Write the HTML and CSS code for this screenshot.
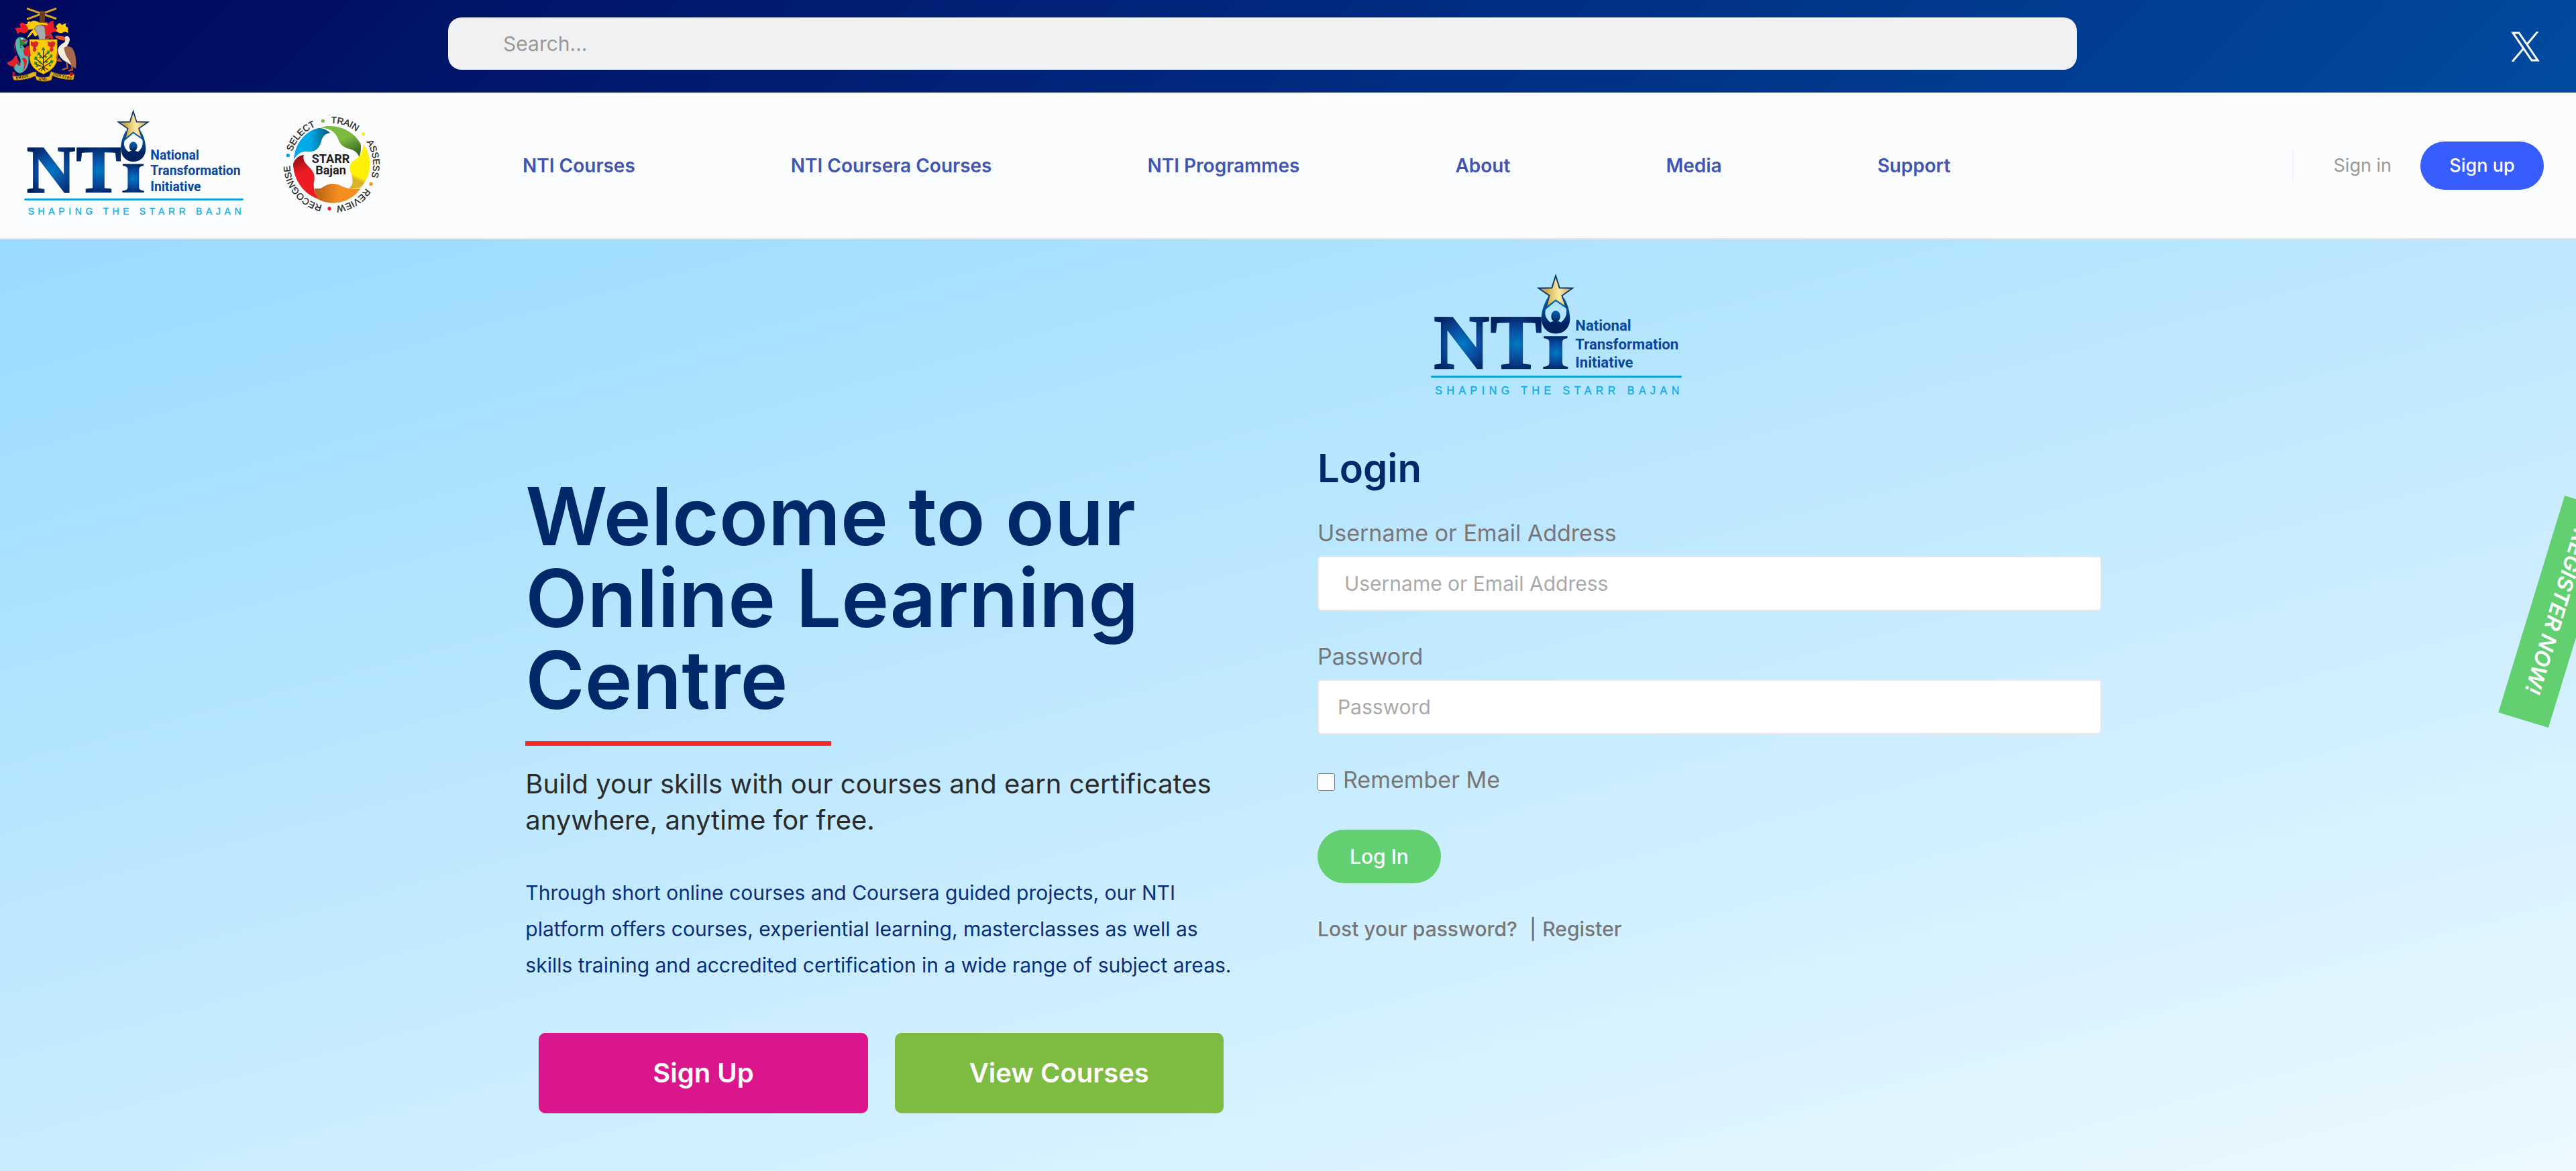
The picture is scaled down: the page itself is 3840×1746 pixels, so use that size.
FILE: index.html
```html
<!DOCTYPE html>
<html lang="en">
<head>
<meta charset="utf-8">
<meta name="viewport" content="width=device-width, initial-scale=1">
<title>National Transformation Initiative – Login</title>
<link rel="stylesheet" href="styles.css">
</head>
<body>

<svg class="defs" aria-hidden="true">
  <defs>
    <radialGradient id="blueN" gradientUnits="userSpaceOnUse" cx="172" cy="312" r="130"><stop offset="0" stop-color="#007ac4"/><stop offset=".5" stop-color="#0a4a9c"/><stop offset="1" stop-color="#00215f"/></radialGradient>
    <radialGradient id="blueT" gradientUnits="userSpaceOnUse" cx="385" cy="312" r="115"><stop offset="0" stop-color="#007ac4"/><stop offset=".5" stop-color="#0a4a9c"/><stop offset="1" stop-color="#00215f"/></radialGradient>
    <radialGradient id="blueI" gradientUnits="userSpaceOnUse" cx="537" cy="348" r="72"><stop offset="0" stop-color="#007ac4"/><stop offset=".5" stop-color="#0a4a9c"/><stop offset="1" stop-color="#00215f"/></radialGradient>
    <linearGradient id="cup" x1="0" y1="0" x2="0" y2="1"><stop offset="0" stop-color="#0a6fb8"/><stop offset=".75" stop-color="#00215f"/></linearGradient>
    <linearGradient id="head" x1="0" y1="0" x2="0" y2="1"><stop offset="0" stop-color="#0066b0"/><stop offset="1" stop-color="#00215f"/></linearGradient>
    <linearGradient id="gold"><stop offset="0" stop-color="#c59a2c"/><stop offset=".25" stop-color="#d3ae45"/><stop offset=".6" stop-color="#fbeaa5"/><stop offset="1" stop-color="#c9a038"/></linearGradient>
    <symbol id="nti" viewBox="49 38 981 478">
      <g font-family="'Liberation Serif', serif" font-weight="700" stroke-width="7">
        <text x="60" y="408" font-size="300" fill="url(#blueN)" stroke="url(#blueN)">N</text>
        <text x="282" y="408" font-size="300" fill="url(#blueT)" stroke="url(#blueT)">T</text>
      </g>
      <path fill="url(#blueI)" d="M490 283H583V291Q563 293 563 306V388Q563 401 585 403V411H488V403Q512 401 512 388V306Q512 293 490 291Z"/>
      <path fill="url(#cup)" d="M506 130C490 160 482 182 481 214C482 250 506 273 537 273C570 273 593 250 593 214C592 182 583 155 568 130L577 170C582 190 580 212 557 229C553 222 521 222 517 229C494 212 491 190 502 170Z"/>
      <ellipse cx="537" cy="205" rx="18" ry="22" fill="url(#head)"/>
      <path fill="url(#gold)" stroke="#0b3478" stroke-width="5" d="M537 46L552 94L603 95L562 124L578 170L537 142L499 172L512 124L470 95L522 94Z"/>
      <path fill="none" stroke="#0a6fb8" stroke-width="5" d="M500 174L537 143L576 170"/>
      <g font-family="Roboto, sans-serif" font-weight="700" font-size="58" fill="#0c479d">
        <text x="614" y="262">National</text>
        <text x="614" y="334">Transformation</text>
        <text x="614" y="406">Initiative</text>
      </g>
      <path fill="#00a2da" d="M49 438h981v8H49z"/>
      <text class="tagline" x="65" y="510" font-size="42" fill="#10ade4" stroke="#10ade4">SHAPING THE STARR BAJAN</text>
    </symbol>
  </defs>
</svg>

<div class="topbar">
  <a class="arms" href="#" aria-label="Government of Barbados">
    <svg viewBox="0 0 390 390" width="130" height="130" aria-hidden="true">
      <path d="M120 38L252 84M120 86L252 38" stroke="#d9a520" stroke-width="9"/>
      <path d="M176 102L178 58Q176 48 187 47Q202 48 202 60L200 102Z" fill="#6b3f1c"/>
      <path d="M182 104Q150 84 138 98Q122 92 122 108L104 110Q120 120 122 134L150 130Q128 150 120 172Q138 160 146 146Q150 158 158 164L186 140Z" fill="#ffca05"/>
      <path d="M122 118Q104 94 92 104Q84 112 94 122L66 126Q76 136 76 152Q92 140 104 148Q120 150 126 132Z" fill="#ed1c24"/>
      <path d="M192 104Q214 88 212 110Q224 92 240 92Q236 106 244 114Q232 120 250 128L282 126Q262 150 244 140L226 150Q240 158 236 178L196 150Z" fill="#ed1c24"/>
      <path d="M250 118Q268 92 276 112Q290 104 296 104Q288 116 304 124L304 148Q292 138 280 146Q262 152 250 136Q262 134 250 118Z" fill="#ffca05"/>
      <path d="M160 106Q188 96 214 106L212 114Q188 106 162 114Z" fill="#ffca05"/>
      <path d="M154 132Q156 110 186 112Q204 116 202 140L204 156L226 158Q222 176 198 184L178 182L168 150Z" fill="#a7a9ac" stroke="#555" stroke-width="2"/>
      <path d="M204 158L226 158Q222 172 200 178Z" fill="#c1121f"/>
      <path d="M132 176H256V260Q254 306 194 332Q134 306 132 260Z" fill="#ffca05" stroke="#6b5210" stroke-width="2"/>
      <path d="M138 184l12 6 10-7 12 8-4 14-9 8 5 10-10 10-8-8 4-14-12-8zM214 184l12 6 10-7 12 8-4 14-9 8 5 10-10 10-8-8 4-14-12-8z" fill="#d8232a"/>
      <path d="M194 312V222M194 290L162 264M194 282L228 252M194 262L172 240M194 256L216 232M194 300L230 278M194 298L160 288M172 312L194 300L216 312M184 318L194 302L202 318" stroke="#3a2a10" stroke-width="4" fill="none"/>
      <path d="M194 210l8 12-8 6-9-6zM170 232l10 4-2 10-12 2zM212 226l12 2-4 12-10 2zM156 252l12 4-4 12-12-2zM226 242l10 4-4 12-10-4zM154 276l14 2-4 12-12-2zM228 268l12 4-6 12-12-4zM180 248l8 6-6 8-8-4zM204 248l8 4-6 8-8-4zM178 272l8 4-4 8-10-2zM206 272l10 2-6 8-8-2zM162 292l10 0-2 8-10 0zM222 288l8 2-4 8-8-2z" fill="#27863b"/>
      <path d="M72 178Q84 160 104 168L126 182L118 196L98 200Q134 240 128 280Q120 322 88 328Q62 320 60 294Q38 296 32 280Q50 280 58 270Q66 252 76 248Q74 280 82 292Q96 288 90 262Q60 210 72 178Z" fill="#5bb5b5" stroke="#17656b" stroke-width="2"/>
      <path d="M72 178Q56 204 70 244L92 290Q84 300 84 290L68 250Q60 264 52 270L32 280Q36 296 60 298L66 312Q64 288 78 284Q66 230 66 210M104 226Q120 200 130 206L138 250Q120 256 108 246ZM98 262Q118 250 120 278Q114 308 100 318Q118 292 98 262Z" fill="#e3202b"/>
      <path d="M88 172L124 180L108 190L122 198L100 202L92 210L106 216L90 216Z" fill="#2d8a3b"/>
      <path d="M96 176L126 182L108 188Z" fill="#e3202b"/>
      <circle cx="98" cy="174" r="4" fill="#fff"/>
      <path d="M248 160Q270 158 294 166L298 182Q270 182 248 168Z" fill="#e8532b"/>
      <path d="M290 164Q312 156 312 180Q308 196 300 204Q330 230 334 270L338 306Q312 286 294 276Q262 258 258 224Q262 202 288 190Q294 182 290 164Z" fill="#f6eedb"/>
      <path d="M288 214Q308 200 324 216Q344 244 340 304Q318 292 310 268Q292 246 288 214Z" fill="#a9694b" stroke="#5b3524" stroke-width="2"/>
      <path d="M298 278L302 304L278 312M320 288L324 312L306 316M262 262L270 272L252 270M258 240L252 262" stroke="#c05531" stroke-width="7" fill="none"/>
      <path d="M56 340Q110 342 150 322L162 322V340L172 344Q196 350 220 342L228 320Q280 340 322 332L332 334L328 356Q280 358 234 338L230 358Q196 370 164 358L158 340Q114 360 62 358Z" fill="#e9b21c" stroke="#8a6410" stroke-width="2"/>
      <path d="M56 322l12 0-2 18-10 0zM312 322l16 4-4 14-12-2z" fill="#c1121f"/>
      <g font-family="'Liberation Serif', serif" font-weight="700" font-size="19" fill="#2a1c05">
        <text x="72" y="356" transform="rotate(-12 72 356)">PRIDE</text>
        <text x="172" y="361" font-size="17">AND</text>
        <text x="236" y="336" font-size="17" transform="rotate(13 236 336)">INDUSTRY</text>
      </g>
    </svg>
  </a>
  <input class="search" type="search" placeholder="Search..." aria-label="Search">
  <a class="social" href="#" aria-label="X">
    <svg viewBox="0 0 44 45" width="44" height="45" fill="none" stroke="#fff" aria-hidden="true">
      <path stroke-width="3" d="M3 2H12L40 43H31Z"/>
      <path stroke-width="3" d="M40 0L24 19M2 45L19 25"/>
    </svg>
  </a>
</div>

<header class="header">
  <a class="brand" href="#" aria-label="NTI home"><svg class="brand-logo" aria-hidden="true"><use href="#nti"/></svg></a>
  <a class="starr" href="#" aria-label="STARR Bajan">
    <svg viewBox="0 0 510 495" width="170" height="165" aria-hidden="true">
      <defs>
        <path id="ring" d="M256 431A186 186 0 0 1 256 59A186 186 0 0 1 256 431"/>
        <linearGradient id="sb"><stop offset=".45" stop-color="#00a9e7"/><stop offset="1" stop-color="#0b5573"/></linearGradient>
        <linearGradient id="sg" x1="0" y1="0" x2=".6" y2="1"><stop offset=".55" stop-color="#7cba42"/><stop offset="1" stop-color="#3c6b22"/></linearGradient>
        <linearGradient id="sy" x1=".2" y1="0" x2="0" y2="1"><stop offset=".65" stop-color="#fff00a"/><stop offset=".75" stop-color="#d9b328"/></linearGradient>
        <linearGradient id="so"><stop offset="0" stop-color="#b05f14"/><stop offset=".5" stop-color="#f58d20"/></linearGradient>
        <linearGradient id="sr" x1=".3" y1="0" x2=".5" y2="1"><stop offset="0" stop-color="#8d0c14"/><stop offset=".4" stop-color="#ed1b24"/></linearGradient>
      </defs>
      <path fill="url(#sb)" d="M87 224C90 150 140 92 200 80Q230 82 250 103C224 106 214 122 208 146C196 184 166 190 145 185C112 186 98 202 87 224Z"/>
      <path fill="url(#sg)" d="M206 78C270 60 350 85 386 152Q390 185 379 213C374 188 352 178 335 174C302 168 290 145 282 122C268 92 235 80 206 78Z"/>
      <path fill="url(#sy)" d="M398 152C442 215 435 290 388 345Q365 355 334 350C360 330 348 300 339 272C330 240 350 232 370 216C390 200 396 180 398 152Z"/>
      <path fill="url(#so)" d="M180 350Q196 354 213 348C246 322 280 328 305 343Q345 360 386 350C350 402 300 416 256 416Q222 414 196 400C186 384 182 368 180 350Z"/>
      <path fill="url(#sr)" d="M84 240Q96 206 132 200C124 228 142 240 158 258C182 282 182 300 176 328Q174 362 196 398C130 376 84 310 84 240Z"/>
      <g font-family="'Liberation Sans', sans-serif" font-size="41" fill="#231f20" stroke="#231f20" text-anchor="middle">
        <text transform="rotate(-47 256 245)"><textPath href="#ring" startOffset="50%">SELECT</textPath></text>
        <text transform="rotate(18 256 245)"><textPath href="#ring" startOffset="50%">TRAIN</textPath></text>
        <text transform="rotate(82 256 245)"><textPath href="#ring" startOffset="50%">ASSESS</textPath></text>
        <text transform="rotate(149 256 245)"><textPath href="#ring" startOffset="50%">REVIEW</textPath></text>
        <text transform="rotate(231 256 245)"><textPath href="#ring" startOffset="50%">RECOGNISE</textPath></text>
      </g>
      <circle cx="217" cy="49" r="8" fill="#7cba42"/><circle cx="398" cy="107" r="8" fill="#fff00a"/><circle cx="432" cy="331" r="8" fill="#f58d20"/><circle cx="246" cy="441" r="8" fill="#ed1b24"/><circle cx="61" cy="203" r="8" fill="#00a9e7"/>
      <g font-family="Roboto, sans-serif" font-weight="700" font-size="54" fill="#231f20" text-anchor="middle">
        <text x="252" y="237">STARR</text>
        <text x="252" y="288">Bajan</text>
      </g>
    </svg>
  </a>
  <nav class="nav" aria-label="Main">
    <a href="#">NTI Courses</a>
    <a href="#">NTI Coursera Courses</a>
    <a href="#">NTI Programmes</a>
    <a href="#">About</a>
    <a href="#">Media</a>
    <a href="#">Support</a>
  </nav>
  <div class="account">
    <a class="signin" href="#">Sign in</a>
    <a class="signup" href="#">Sign up</a>
  </div>
</header>

<main class="hero">
  <section class="intro">
    <h1>Welcome to our Online Learning Centre</h1>
    <hr>
    <p class="lead">Build your skills with our courses and earn certificates anywhere, anytime for free.</p>
    <p class="about">Through short online courses and Coursera guided projects, our NTI platform offers courses, experiential learning, masterclasses as well as skills training and accredited certification in a wide range of subject areas.</p>
    <div class="actions">
      <a class="cta cta-signup" href="#">Sign Up</a>
      <a class="cta cta-courses" href="#">View Courses</a>
    </div>
  </section>

  <form class="login">
    <svg class="login-logo" aria-hidden="true"><use href="#nti"/></svg>
    <h2>Login</h2>
    <label for="user">Username or Email Address</label>
    <input class="field field-user" id="user" type="text" placeholder="Username or Email Address">
    <label for="pass">Password</label>
    <input class="field" id="pass" type="password" placeholder="Password">
    <div class="remember">
      <input id="remember" type="checkbox">
      <label for="remember">Remember Me</label>
    </div>
    <button class="submit" type="submit">Log In</button>
    <p class="links"><a href="#">Lost your password?</a><span>|</span><a href="#">Register</a></p>
  </form>

  <a class="ribbon" href="#">REGISTER NOW!</a>
</main>

</body>
</html>
```

FILE: styles.css
```css
* { box-sizing: border-box; }

body {
  margin: 0;
  min-height: 100vh;
  display: flex;
  flex-direction: column;
  font-family: Inter, "Liberation Sans", sans-serif;
  color: #777;
}

a { color: inherit; text-decoration: none; }
h1, h2, p { margin: 0; }

.defs { position: absolute; width: 0; height: 0; }

/* Top bar */
.topbar {
  display: grid;
  grid-template-columns: 668px 1fr 744px;
  align-items: start;
  height: 138px;
  background: linear-gradient(135deg, #00085c, #004ba0);
}
.arms svg, .social svg, .starr svg { display: block; }
.search {
  height: 78px;
  margin-top: 26px;
  padding: 0 82px;
  border: 0;
  border-radius: 20px;
  background: #f0f1f3;
  font: 30px Inter, sans-serif;
}
.search::placeholder { color: #999; }
.social { justify-self: end; margin: 47px 53px 0 0; }

/* Header */
.header {
  display: flex;
  align-items: center;
  height: 219px;
  padding: 0 48px 0 36px;
  background: #fbfcfe;
  border-bottom: 2px solid #e2e4e8;
}
.brand-logo { display: block; width: 327px; height: 159px; margin-bottom: 8px; }
.starr { margin-left: 46px; }
.nav {
  display: flex;
  gap: 232px;
  margin-left: 200px;
  font-size: 28px;
  font-weight: 600;
  color: #4055b2;
  white-space: nowrap;
}
.account {
  display: flex;
  align-items: center;
  margin-left: auto;
  font-size: 27px;
  white-space: nowrap;
}
.signin {
  padding: 0 43px 0 60px;
  border-left: 2px solid #f1f3f6;
  line-height: 48px;
  color: #999;
}
.signup {
  width: 184px;
  border-radius: 36px;
  background: #385dff;
  color: #fff;
  font-weight: 500;
  line-height: 72px;
  text-align: center;
}

/* Hero */
.hero {
  position: relative;
  flex: 1;
  display: grid;
  grid-template-columns: 1057fr 1170fr;
  align-items: start;
  gap: 124px;
  padding: 51px 18.4% 86px 20.4%;
  overflow: hidden;
  background: linear-gradient(165deg, #99dbff, #ecf9ff);
}

.intro { padding-top: 301px; }
h1 {
  font-size: 120px;
  font-weight: 600;
  line-height: 122px;
  color: #012869;
}
hr {
  width: 456px;
  height: 7px;
  margin: 30px 0;
  border: 0;
  background: #ff2626;
}
.lead { font-size: 40px; line-height: 54px; color: #2b2b2b; }
.about { margin-top: 54px; font-size: 30px; line-height: 54px; color: #0a2f7a; }
.actions { display: flex; gap: 40px; margin: 74px 16px 0 20px; }
.cta {
  flex: 1;
  border-radius: 10px;
  color: #fff;
  font-size: 40px;
  font-weight: 600;
  line-height: 120px;
  text-align: center;
}
.cta-signup { background: #db168d; }
.cta-courses { background: #7dbb42; }

/* Login form */
.login { display: flex; flex-direction: column; font-size: 34px; line-height: 52px; }
.login-logo { width: 374px; height: 182px; margin-left: 169px; }
h2 {
  margin: 74px 0 37px;
  font-size: 58px;
  font-weight: 600;
  line-height: 68px;
  color: #012869;
}
.field {
  height: 82px;
  margin: 8px 0 42px;
  padding: 0 28px;
  border: 2px solid #e6e8ec;
  border-radius: 6px;
  background: #fff;
  font: 30px Inter, sans-serif;
}
.field-user { padding: 0 38px; }
.field::placeholder { color: #aaa; }
.remember { display: flex; align-items: center; gap: 12px; }
.remember input { width: 26px; height: 26px; margin: 6px 0 0; }
.submit {
  align-self: flex-start;
  width: 184px;
  height: 80px;
  margin: 48px 0 42px;
  border: 0;
  border-radius: 40px;
  background: #62cf71;
  color: #fff;
  font: 500 30px Inter, sans-serif;
}
.links { display: flex; font-size: 30px; font-weight: 500; }
.links span { margin: 0 9px 0 18px; }

/* Slanted call-out hanging off the right edge */
.ribbon {
  position: absolute;
  top: 516px;
  right: -140px;
  width: 338px;
  background: #62cf71;
  color: #fff;
  font-size: 32px;
  font-style: italic;
  font-weight: 600;
  line-height: 78px;
  text-align: center;
  transform: rotate(107deg);
}

.tagline { font-family: "Liberation Sans", sans-serif; letter-spacing: 17px; }
```
